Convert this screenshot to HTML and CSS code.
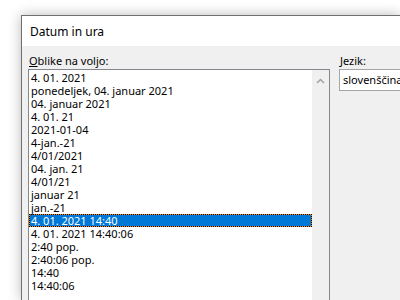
FILE: index.html
```html
<!DOCTYPE html>
<html lang="sl">
<head>
    <meta charset="UTF-8">
    <title>Datum in ura</title>
    <link rel="stylesheet" href="styles.css">
</head>
<body>
    <div class="dialog">
        <div class="titlebar">Datum in ura</div>

        <div class="dialog-body">
            <div class="formats">
                <label class="field-label"><u>O</u>blike na voljo:</label>
                <div class="listbox">
                    <ul class="options">
                        <li>4. 01. 2021</li>
                        <li>ponedeljek, 04. januar 2021</li>
                        <li>04. januar 2021</li>
                        <li>4. 01. 21</li>
                        <li>2021-01-04</li>
                        <li>4-jan.-21</li>
                        <li>4/01/2021</li>
                        <li>04. jan. 21</li>
                        <li>4/01/21</li>
                        <li>januar 21</li>
                        <li>jan.-21</li>
                        <li class="selected">4. 01. 2021 14:40</li>
                        <li>4. 01. 2021 14:40:06</li>
                        <li>2:40 pop.</li>
                        <li>2:40:06 pop.</li>
                        <li>14:40</li>
                        <li>14:40:06</li>
                    </ul>
                    <div class="scrollbar">
                        <svg width="17" height="17" viewBox="0 0 17 17">
                            <polyline points="5,11 8.5,7.5 12,11" fill="none" stroke="#a3a3a3" stroke-width="1.5"/>
                        </svg>
                    </div>
                </div>
            </div>

            <div class="language">
                <label class="field-label"><u>J</u>ezik:</label>
                <div class="combo">slovenščina</div>
            </div>
        </div>
    </div>
</body>
</html>
```

FILE: styles.css
```css
* {
    box-sizing: border-box;
    margin: 0;
    padding: 0;
}

body {
    background-color: #ffffff;
    font-family: "Noto Sans", "Open Sans", sans-serif;
    font-size: 11px;
    color: #000;
    overflow: hidden;
    padding: 15px 0 0 21px;
}

.dialog {
    width: 379px;
    height: 285px;
    border: 1px solid #6f6f6f;
    border-right: none;
    border-bottom: none;
    background: #f0f0f0;
    box-shadow: 0 0 12px rgba(0, 0, 0, 0.28);
    overflow: hidden;
}

.titlebar {
    background: #fff;
    height: 30px;
    line-height: 32px;
    padding-left: 8px;
    font-size: 12px;
}

.dialog-body {
    display: flex;
    gap: 9px;
    padding: 7px 0 0 6px;
}

.field-label {
    display: block;
    line-height: 16px;
    padding-left: 1px;
}

.formats {
    width: 302px;
}

.listbox {
    display: flex;
    height: 240px;
    background: #fff;
    border: 1px solid #828790;
    border-bottom: none;
}

.options {
    list-style: none;
    flex: 1;
    padding-top: 1px;
}

.options li {
    height: 13px;
    line-height: 13px;
    padding-left: 2px;
    white-space: nowrap;
}

.options li.selected {
    background: #0078d7;
    color: #fff;
    box-shadow: inset 0 0 0 1px #ff8c00;
    outline: 1px dotted #000;
    outline-offset: -1px;
}

.scrollbar {
    width: 17px;
    background: #f0f0f0;
}

.scrollbar svg {
    display: block;
    margin-top: 2px;
}

.language {
    flex: 1;
    min-width: 0;
}

.combo {
    height: 22px;
    line-height: 20px;
    padding-left: 3px;
    background: #fff;
    border: 1px solid #a5a5a5;
    border-right: none;
    white-space: nowrap;
    overflow: hidden;
}
```
